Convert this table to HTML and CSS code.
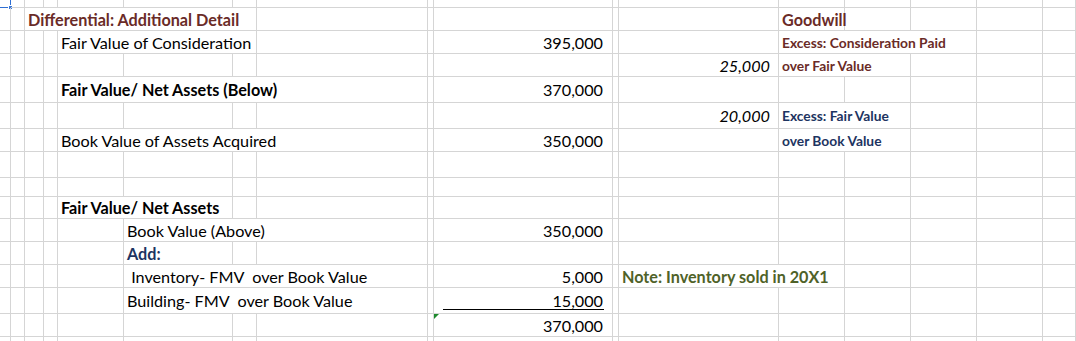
FILE: index.html
```html
<!DOCTYPE html>
<html lang="en">
<head>
<meta charset="utf-8">
<title>Differential: Additional Detail</title>
<link rel="stylesheet" href="styles.css">
</head>
<body>
<div class="sheet">
  <!-- row 0 -->
  <div class="c sel"></div><div class="c"></div><div class="c"></div><div class="c"></div><div class="c"></div><div class="c"></div><div class="c"></div><div class="c"></div><div class="c"></div><div class="c"></div><div class="c"></div><div class="c"></div><div class="c"></div><div class="c"></div><div class="c"></div><div class="c"></div><div class="c"></div>
  <!-- row 1 -->
  <div class="c"></div><div class="c"></div>
  <div class="c t s5 head brown">Differential: Additional Detail</div>
  <div class="c"></div><div class="c"></div><div class="c"></div><div class="c"></div><div class="c"></div>
  <div class="c t head brown">Goodwill</div>
  <div class="c"></div><div class="c"></div><div class="c"></div><div class="c"></div>
  <!-- row 2 -->
  <div class="c"></div><div class="c"></div><div class="c"></div><div class="c"></div>
  <div class="c t s3">Fair Value of Consideration</div>
  <div class="c"></div><div class="c"></div>
  <div class="c n">395,000</div>
  <div class="c"></div><div class="c"></div>
  <div class="c t s3 small brown">Excess: Consideration Paid</div>
  <div class="c"></div><div class="c"></div>
  <!-- row 3 -->
  <div class="c"></div><div class="c"></div><div class="c"></div><div class="c"></div><div class="c"></div><div class="c"></div><div class="c"></div><div class="c"></div><div class="c"></div><div class="c"></div><div class="c"></div>
  <div class="c n it">25,000</div>
  <div class="c t s2 small brown">over Fair Value</div>
  <div class="c"></div><div class="c"></div><div class="c"></div>
  <!-- row 4 -->
  <div class="c"></div><div class="c"></div><div class="c"></div><div class="c"></div>
  <div class="c t s4 b">Fair Value/ Net Assets (Below)</div>
  <div class="c"></div>
  <div class="c n">370,000</div>
  <div class="c"></div><div class="c"></div><div class="c"></div><div class="c"></div><div class="c"></div><div class="c"></div><div class="c"></div>
  <!-- row 5 -->
  <div class="c"></div><div class="c"></div><div class="c"></div><div class="c"></div><div class="c"></div><div class="c"></div><div class="c"></div><div class="c"></div><div class="c"></div><div class="c"></div><div class="c"></div>
  <div class="c n it">20,000</div>
  <div class="c t s2 small navy">Excess: Fair Value</div>
  <div class="c"></div><div class="c"></div><div class="c"></div>
  <!-- row 6 -->
  <div class="c"></div><div class="c"></div><div class="c"></div><div class="c"></div>
  <div class="c t s4">Book Value of Assets Acquired</div>
  <div class="c"></div>
  <div class="c n">350,000</div>
  <div class="c"></div><div class="c"></div>
  <div class="c t s2 small navy">over Book Value</div>
  <div class="c"></div><div class="c"></div><div class="c"></div>
  <!-- row 7 -->
  <div class="c"></div><div class="c"></div><div class="c"></div><div class="c"></div><div class="c"></div><div class="c"></div><div class="c"></div><div class="c"></div><div class="c"></div><div class="c"></div><div class="c"></div><div class="c"></div><div class="c"></div><div class="c"></div><div class="c"></div><div class="c"></div><div class="c"></div>
  <!-- row 8 -->
  <div class="c"></div><div class="c"></div><div class="c"></div><div class="c"></div><div class="c"></div><div class="c"></div><div class="c"></div><div class="c"></div><div class="c"></div><div class="c"></div><div class="c"></div><div class="c"></div><div class="c"></div><div class="c"></div><div class="c"></div><div class="c"></div><div class="c"></div>
  <!-- row 9 -->
  <div class="c"></div><div class="c"></div><div class="c"></div><div class="c"></div>
  <div class="c t s2 b">Fair Value/ Net Assets</div>
  <div class="c"></div><div class="c"></div><div class="c"></div><div class="c"></div><div class="c"></div><div class="c"></div><div class="c"></div><div class="c"></div><div class="c"></div><div class="c"></div><div class="c"></div>
  <!-- row 10 -->
  <div class="c"></div><div class="c"></div><div class="c"></div><div class="c"></div><div class="c"></div>
  <div class="c t s3">Book Value (Above)</div>
  <div class="c"></div>
  <div class="c n">350,000</div>
  <div class="c"></div><div class="c"></div><div class="c"></div><div class="c"></div><div class="c"></div><div class="c"></div><div class="c"></div>
  <!-- row 11 -->
  <div class="c"></div><div class="c"></div><div class="c"></div><div class="c"></div><div class="c"></div>
  <div class="c t b navy">Add:</div>
  <div class="c"></div><div class="c"></div><div class="c"></div><div class="c"></div><div class="c"></div><div class="c"></div><div class="c"></div><div class="c"></div><div class="c"></div><div class="c"></div><div class="c"></div>
  <!-- row 12 -->
  <div class="c"></div><div class="c"></div><div class="c"></div><div class="c"></div><div class="c"></div>
  <div class="c t s3 pre"> Inventory- FMV  over Book Value</div>
  <div class="c"></div>
  <div class="c n">5,000</div>
  <div class="c"></div>
  <div class="c t s2 b olive">Note: Inventory sold in 20X1</div>
  <div class="c"></div><div class="c"></div><div class="c"></div><div class="c"></div>
  <!-- row 13 -->
  <div class="c"></div><div class="c"></div><div class="c"></div><div class="c"></div><div class="c"></div>
  <div class="c t s3 pre">Building- FMV  over Book Value</div>
  <div class="c"></div>
  <div class="c n under">15,000</div>
  <div class="c"></div><div class="c"></div><div class="c"></div><div class="c"></div><div class="c"></div><div class="c"></div><div class="c"></div>
  <!-- row 14 -->
  <div class="c"></div><div class="c"></div><div class="c"></div><div class="c"></div><div class="c"></div><div class="c"></div><div class="c"></div><div class="c"></div><div class="c"></div>
  <div class="c n flag">370,000</div>
  <div class="c"></div><div class="c"></div><div class="c"></div><div class="c"></div><div class="c"></div><div class="c"></div><div class="c"></div>
  <!-- row 15 -->
  <div class="c"></div><div class="c"></div><div class="c"></div><div class="c"></div><div class="c"></div><div class="c"></div><div class="c"></div><div class="c"></div><div class="c"></div><div class="c"></div><div class="c"></div><div class="c"></div><div class="c"></div><div class="c"></div><div class="c"></div><div class="c"></div><div class="c"></div>
</div>
</body>
</html>
```
FILE: styles.css
```css
html, body {
  margin: 0;
  padding: 0;
  background: #ffffff;
}

body {
  width: 1076px;
  height: 341px;
  overflow: hidden;
  font-family: Lato, "Open Sans", sans-serif;
  font-size: 16.2px;
  color: #000;
}

.sheet {
  display: grid;
  grid-template-columns: 11px 14px 19px 14px 66px 109px 24px 171px 6px 179px 6px 160px 66px 66px 66px 66px 1fr;
  grid-template-rows: 8px 23px 23px 23px 26px 26px 23px 26px 19px 22px 23px 23px 23px 26px 23px 5px;
  height: 341px;
  overflow: hidden;
}

.c {
  box-sizing: border-box;
  border-right: 1px solid #d5d5d5;
  border-bottom: 1px solid #d5d5d5;
  min-width: 0;
  display: flex;
  align-items: center;
  white-space: nowrap;
  overflow: visible;
  position: relative;
}

.s2 { grid-column: span 2; }
.s3 { grid-column: span 3; }
.s4 { grid-column: span 4; }
.s5 { grid-column: span 5; }

.t {
  padding-left: 3px;
}

.pre {
  white-space: pre;
}

.n {
  justify-content: flex-end;
  padding-right: 9px;
}

.it {
  font-style: italic;
  padding-right: 8px;
}

.b { font-weight: 700; }

.head {
  font-weight: 700;
}

.small {
  font-size: 13.8px;
  font-weight: 700;
}

.brown { color: #6a2b27; }
.navy { color: #1d3461; }
.olive { color: #4f6228; }

.under::after {
  content: "";
  position: absolute;
  left: 9px;
  right: 8px;
  bottom: 3px;
  height: 1px;
  background: #000;
}

.flag::before {
  content: "";
  position: absolute;
  left: 0;
  top: 0;
  width: 0;
  height: 0;
  border-top: 5px solid #1e8a2e;
  border-right: 5px solid transparent;
}

.sel {
  border-right-color: #2f6fd3;
  border-bottom-color: #2f6fd3;
}

.sel::after {
  content: "";
  position: absolute;
  right: -3px;
  bottom: -3px;
  width: 5px;
  height: 5px;
  box-sizing: border-box;
  background: #3b78d8;
  border: 1px solid #ffffff;
}
```
